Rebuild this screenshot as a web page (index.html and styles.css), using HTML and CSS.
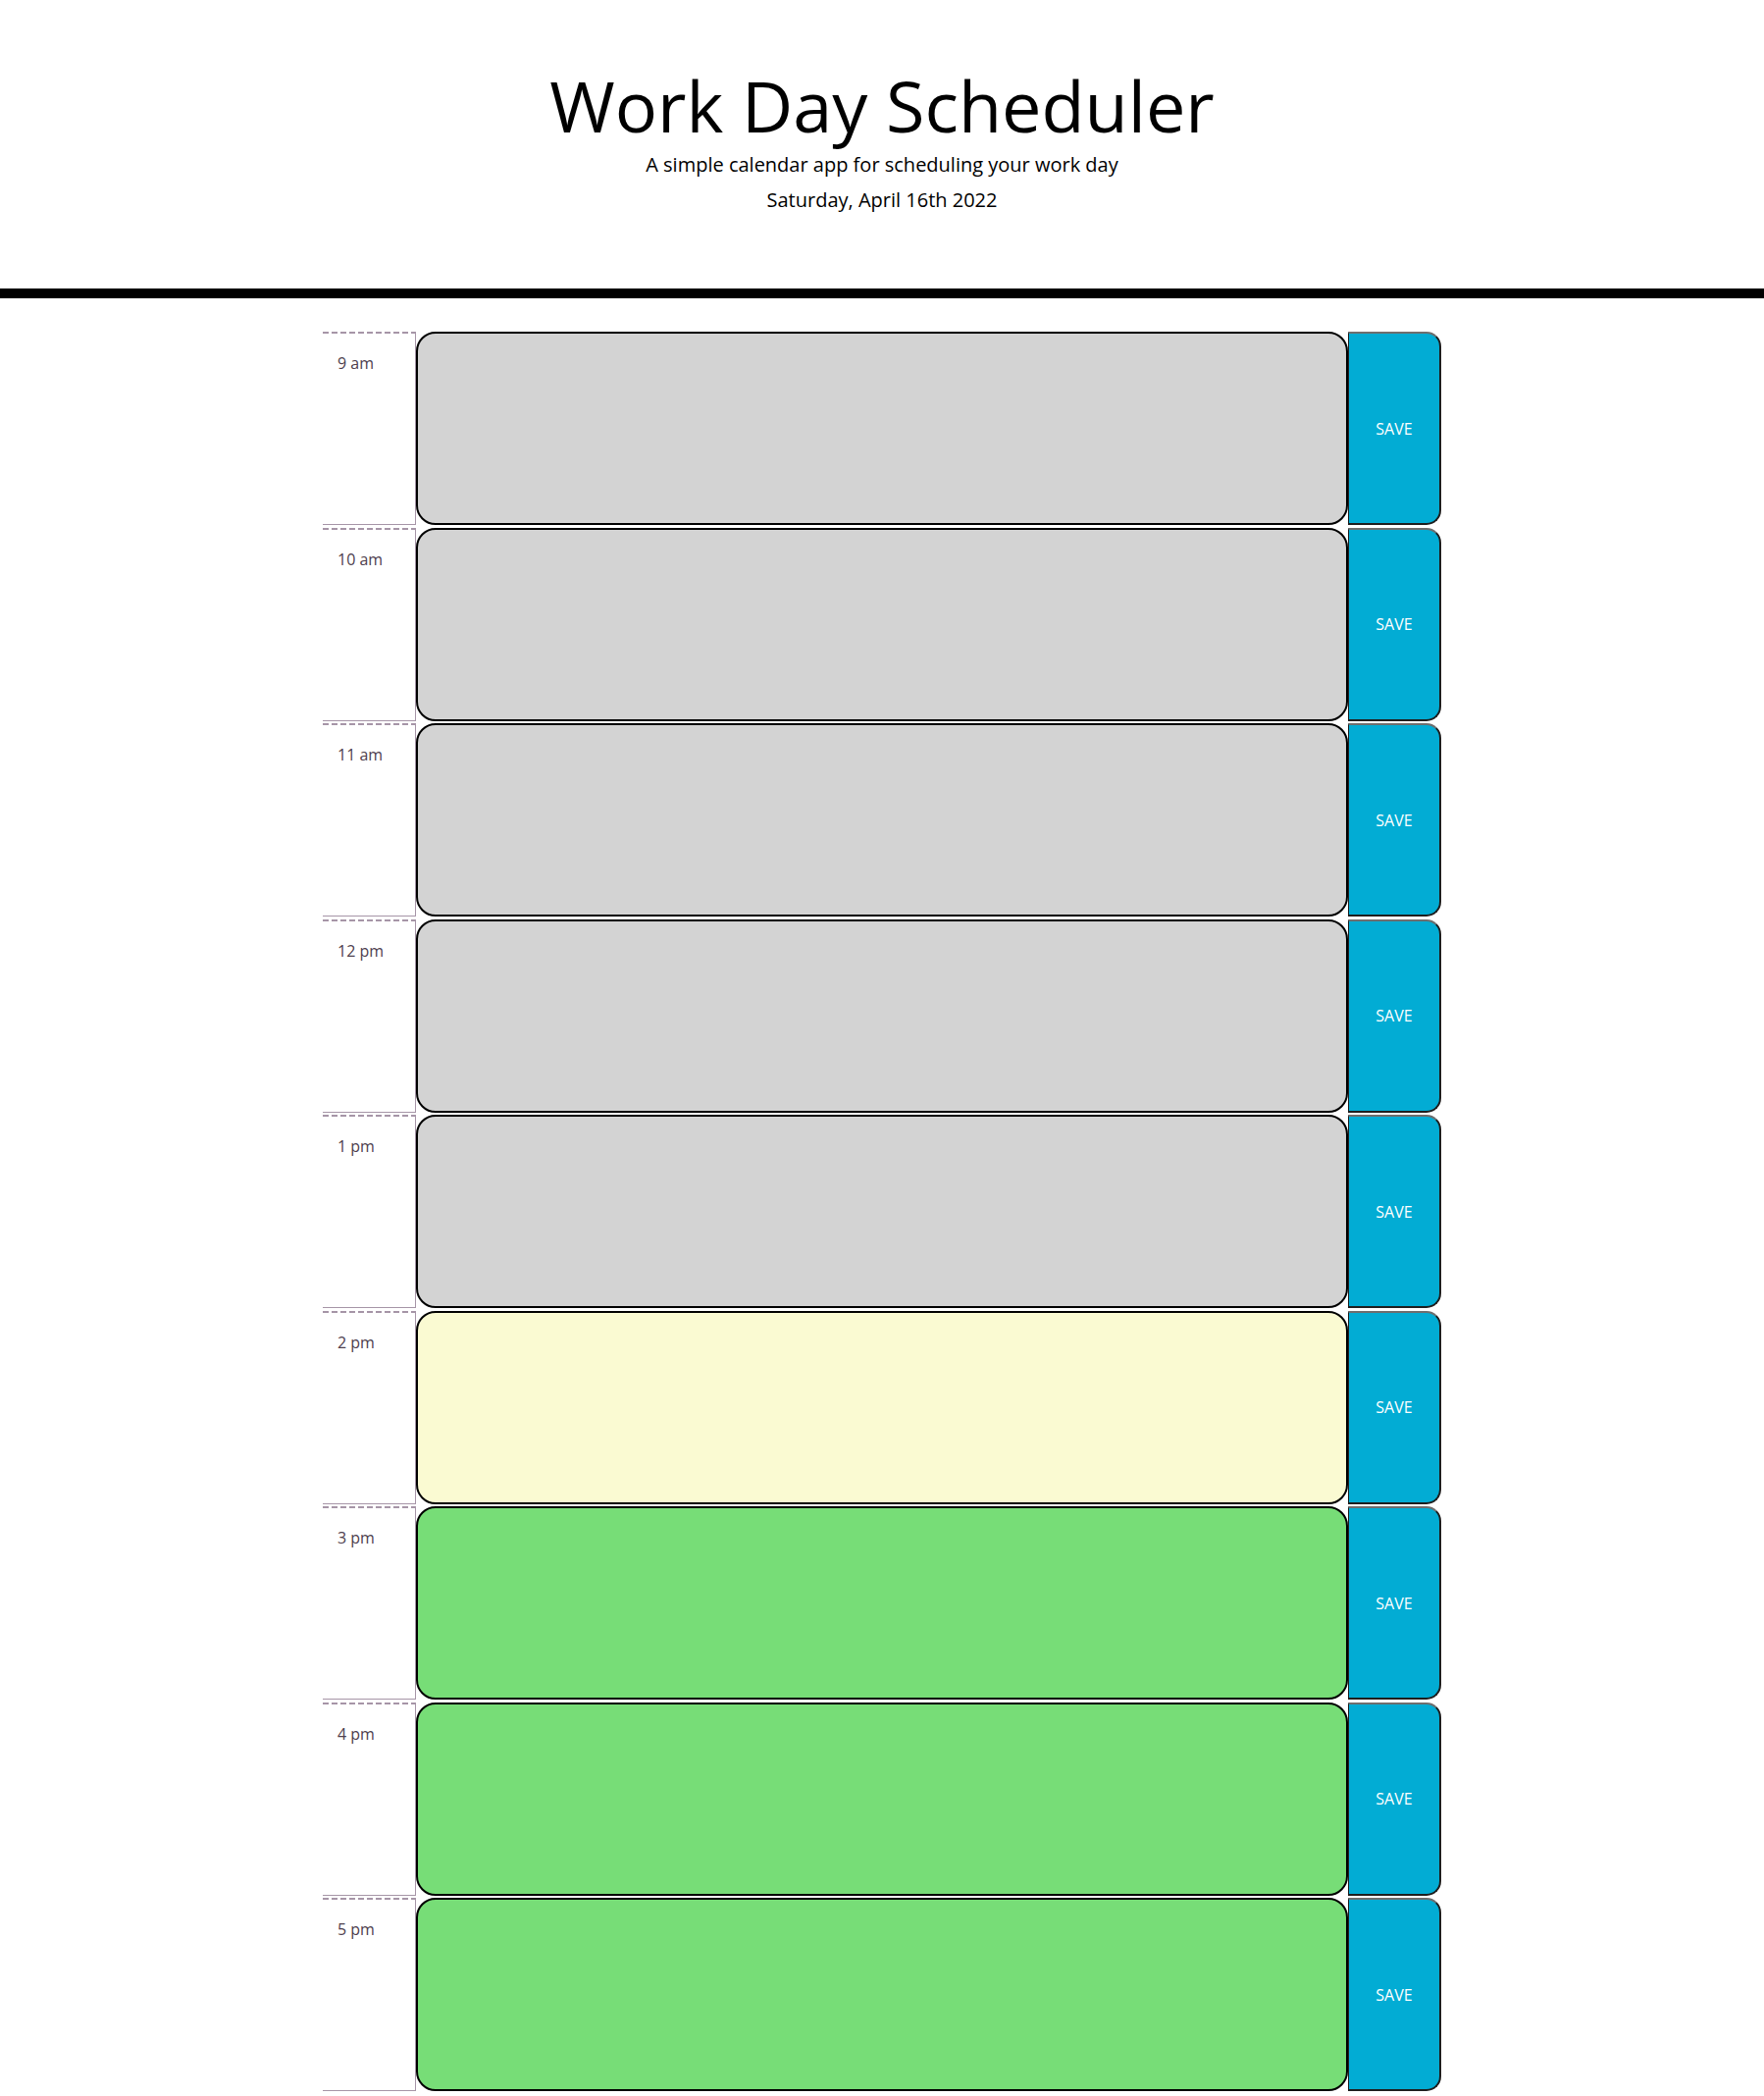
FILE: index.html
```html
<!DOCTYPE html>
<html lang="en">
<head>
<meta charset="utf-8">
<title>Work Day Scheduler</title>
<link rel="stylesheet" href="styles.css">
</head>
<body>
<header class="jumbotron">
  <h1 class="display">Work Day Scheduler</h1>
  <p class="lead">A simple calendar app for scheduling your work day</p>
  <p class="lead current-day">Saturday, April 16th 2022</p>
</header>
<main class="container">
  <div class="row">
    <div class="hour">9 am</div>
    <textarea class="description past"></textarea>
    <button class="saveBtn">SAVE</button>
  </div>
  <div class="row">
    <div class="hour">10 am</div>
    <textarea class="description past"></textarea>
    <button class="saveBtn">SAVE</button>
  </div>
  <div class="row">
    <div class="hour">11 am</div>
    <textarea class="description past"></textarea>
    <button class="saveBtn">SAVE</button>
  </div>
  <div class="row">
    <div class="hour">12 pm</div>
    <textarea class="description past"></textarea>
    <button class="saveBtn">SAVE</button>
  </div>
  <div class="row">
    <div class="hour">1 pm</div>
    <textarea class="description past"></textarea>
    <button class="saveBtn">SAVE</button>
  </div>
  <div class="row">
    <div class="hour">2 pm</div>
    <textarea class="description present"></textarea>
    <button class="saveBtn">SAVE</button>
  </div>
  <div class="row">
    <div class="hour">3 pm</div>
    <textarea class="description future"></textarea>
    <button class="saveBtn">SAVE</button>
  </div>
  <div class="row">
    <div class="hour">4 pm</div>
    <textarea class="description future"></textarea>
    <button class="saveBtn">SAVE</button>
  </div>
  <div class="row">
    <div class="hour">5 pm</div>
    <textarea class="description future"></textarea>
    <button class="saveBtn">SAVE</button>
  </div>
</main>
</body>
</html>
```
FILE: styles.css
```css
* {
  box-sizing: border-box;
}

body {
  margin: 0;
  font-family: "Open Sans", "Liberation Sans", sans-serif;
  line-height: 1;
  color: #000;
  background: #fff;
}

.jumbotron {
  text-align: center;
  padding: 64px 32px;
  margin-bottom: 34px;
  border-bottom: 10px solid #000;
}

.display {
  font-size: 72px;
  font-weight: 400;
  line-height: 1.2;
  margin: 0 0 8px;
}

.lead {
  font-size: 20px;
  font-weight: 400;
  margin: 0 0 16px;
}

.current-day {
  margin-bottom: 16px;
}

.container {
  width: 1140px;
  margin: 0 auto;
}

.row {
  display: flex;
  height: 199.5px;
}

.hour {
  width: 95px;
  height: 197px;
  padding: 24px 0 0 15px;
  font-size: 16px;
  color: #4e404e;
  border-right: 1px solid #a695a7;
  border-bottom: 1px solid #a695a7;
  background: repeating-linear-gradient(to right, #a695a7 0 6px, transparent 6px 9px) top left / 100% 2px no-repeat;
}

.description {
  width: 950px;
  height: 197px;
  margin: 0;
  padding: 10px;
  resize: none;
  border: 2px solid #000;
  border-radius: 20px;
  font-family: inherit;
  font-size: 16px;
}

.past {
  background-color: #d3d3d3;
}

.present {
  background-color: #fafad2;
}

.future {
  background-color: #77dd77;
}

.saveBtn {
  width: 95px;
  height: 197px;
  margin: 0;
  padding: 0;
  background-color: #02acd4;
  color: #fff;
  font-family: inherit;
  font-size: 16px;
  border: 2px solid #1e1e1e;
  border-top-color: #6e6e6e;
  border-left-width: 1px;
  border-radius: 0 15px 15px 0;
}
```
